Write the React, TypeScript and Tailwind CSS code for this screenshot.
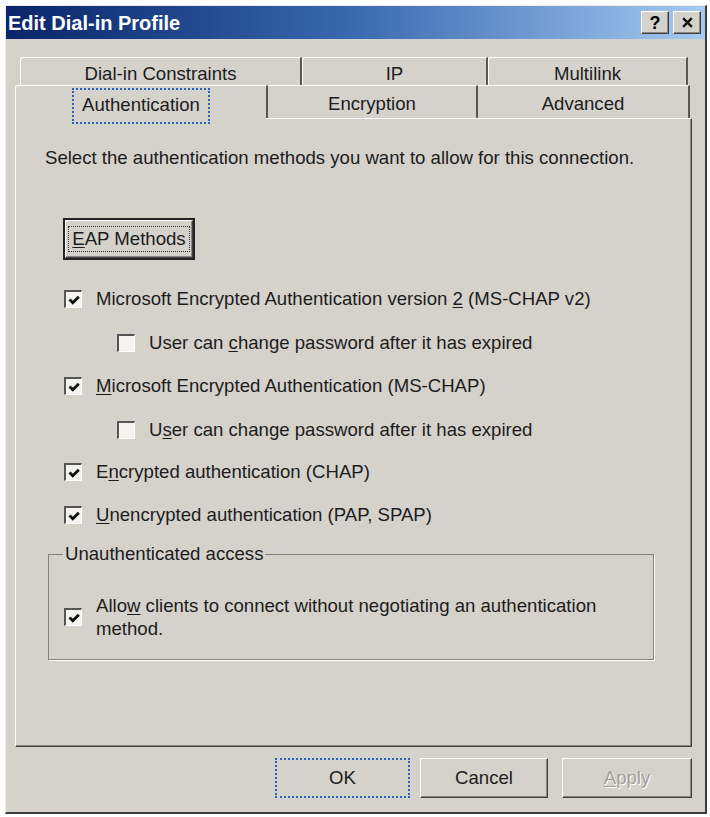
import React from "react";

const face = "bg-[#d5d2cc]";
const font = "font-['Liberation_Sans',Arial,sans-serif]";

const raised =
  "border-t border-l border-t-white border-l-white border-r border-b border-r-[#404040] border-b-[#404040] shadow-[inset_-1px_-1px_0_#8a8782]";

const CheckMark: React.FC = () => (
  <svg viewBox="0 0 14 14" className="w-[14px] h-[14px] shrink-0">
    <path d="M2.5 6.5 L5.8 9.8 L11.8 3.8" fill="none" stroke="#111" strokeWidth="2.8" />
  </svg>
);

const Checkbox: React.FC<{ checked?: boolean }> = ({ checked }) => (
  <span className="shrink-0 w-[18px] h-[18px] bg-[#f4f3f0] border-t-2 border-l-2 border-t-[#555] border-l-[#555] border-r border-b border-r-white border-b-white flex items-center justify-center">
    {checked && <CheckMark />}
  </span>
);

interface RowProps {
  checked?: boolean;
  indent?: boolean;
  className?: string;
  children: React.ReactNode;
}

const CheckRow: React.FC<RowProps> = ({ checked, indent, className, children }) => (
  <div
    className={
      "flex items-center h-[24px] gap-[14px] " +
      (indent ? "ml-[72px] " : "ml-[19px] ") +
      (className ?? "")
    }
  >
    <Checkbox checked={checked} />
    <span className="whitespace-nowrap">{children}</span>
  </div>
);

const backTabs = [
  { label: "Dial-in Constraints", w: "w-[282px]" },
  { label: "IP", w: "w-[186px]" },
  { label: "Multilink", w: "w-[200px]" },
];

const App: React.FC = () => {
  return (
    <div className={"w-[710px] h-[817px] bg-white pt-[5px] pl-[5px] text-[18.6px] text-[#1c1c1c] " + font}>
      <div
        className={
          "w-[702px] h-[809px] flex flex-col border-t border-l border-t-[#ecebe7] border-l-[#ecebe7] border-r-2 border-b-2 border-r-[#3c3c3c] border-b-[#3c3c3c] " +
          face
        }
      >
        {/* title bar */}
        <div className="h-[33px] flex items-center justify-between bg-gradient-to-r from-[#0a246a] via-[#3a6ab0] to-[#a6caf0] pl-[2px] pr-[4px]">
          <span className="text-white font-bold text-[20px] leading-none">Edit Dial-in Profile</span>
          <div className="flex gap-[4px]">
            <span
              className={"w-[28px] h-[23px] flex items-center justify-center text-[18px] font-bold leading-none text-black " + face + " " + raised}
            >
              ?
            </span>
            <span className={"w-[28px] h-[23px] flex items-center justify-center " + face + " " + raised}>
              <svg viewBox="0 0 12 12" className="w-[13px] h-[13px]">
                <path d="M2 2 L10 10 M10 2 L2 10" stroke="#111" strokeWidth="2.2" />
              </svg>
            </span>
          </div>
        </div>

        <div className="pl-[9px] pt-[18px]">
          {/* back row of tabs */}
          <div className="flex ml-[5px] h-[28px]">
            {backTabs.map((t) => (
              <div
                key={t.label}
                className={
                  "flex items-center justify-center pt-[4px] rounded-tl-[3px] border-t border-l border-t-white border-l-white border-r-2 border-r-[#5a5855] " +
                  t.w
                }
              >
                {t.label}
              </div>
            ))}
          </div>
          {/* front row of tabs */}
          <div className="flex h-[33px] relative z-10">
            <div className="relative w-[253px] flex items-center justify-center border-t border-l border-t-white border-l-white border-r-2 border-r-[#5a5855] rounded-tl-[3px]">
              <span className="mt-[8px] px-[8px] pt-[1px] pb-[4px] border-2 border-dotted border-[#2a5fc0]">
                Authentication
              </span>
              <span className={"absolute left-0 right-0 -bottom-[1px] h-[2px] " + face} />
            </div>
            <div className="w-[210px] flex items-center justify-center pt-[4px] border-t border-t-white border-r-2 border-r-[#5a5855]">
              Encryption
            </div>
            <div className="w-[212px] flex items-center justify-center pt-[4px] border-t border-t-white border-r-2 border-r-[#5a5855]">
              Advanced
            </div>
          </div>

          {/* tab panel */}
          <div className="w-[677px] h-[629px] pl-[29px] pt-[28px] border-t border-l border-t-white border-l-white border-r border-b border-r-[#404040] border-b-[#404040] shadow-[inset_-1px_-1px_0_#8a8782]">
            <p className="leading-[22px] whitespace-nowrap">
              Select the authentication methods you want to allow for this connection.
            </p>

            <button
              className={
                "mt-[49px] ml-[18px] w-[132px] h-[42px] border-2 border-[#222] flex items-center justify-center " + face
              }
            >
              <span className={"w-full h-full flex items-center justify-center " + raised}>
                <span className="px-[3px] border border-dotted border-[#333] leading-[24px]">
                  <span className="underline underline-offset-2">E</span>AP Methods
                </span>
              </span>
            </button>

            <CheckRow checked className="mt-[27px]">
              Microsoft Encrypted Authentication version <span className="underline underline-offset-2">2</span> (MS-CHAP v2)
            </CheckRow>
            <CheckRow indent className="mt-[20px]">
              User can <span className="underline underline-offset-2">c</span>hange password after it has expired
            </CheckRow>
            <CheckRow checked className="mt-[19px]">
              <span className="underline underline-offset-2">M</span>icrosoft Encrypted Authentication (MS-CHAP)
            </CheckRow>
            <CheckRow indent className="mt-[20px]">
              U<span className="underline underline-offset-2">s</span>er can change password after it has expired
            </CheckRow>
            <CheckRow checked className="mt-[18px]">
              E<span className="underline underline-offset-2">n</span>crypted authentication (CHAP)
            </CheckRow>
            <CheckRow checked className="mt-[19px]">
              <span className="underline underline-offset-2">U</span>nencrypted authentication (PAP, SPAP)
            </CheckRow>

            <fieldset className="mt-[16px] ml-[3px] w-[606px] border border-[#84817b] shadow-[1px_1px_0_#fff] pb-[19px]">
              <legend className="ml-[14px] px-[2px] leading-[22px]">Unauthenticated access</legend>
              <div className="flex items-center gap-[14px] ml-[15px] mt-[29px]">
                <Checkbox checked />
                <span className="w-[520px] leading-[23px]">
                  Allo<span className="underline underline-offset-2">w</span> clients to connect without negotiating an
                  authentication method.
                </span>
              </div>
            </fieldset>
          </div>

          {/* dialog buttons */}
          <div className="flex mt-[11px] ml-[260px]">
            <button
              className={"w-[135px] h-[40px] flex items-center justify-center border-2 border-dotted border-[#2a5fc0] " + face}
            >
              OK
            </button>
            <button
              className={"ml-[10px] w-[128px] h-[40px] flex items-center justify-center " + face + " " + raised}
            >
              Cancel
            </button>
            <button
              className={
                "ml-[14px] w-[130px] h-[40px] flex items-center justify-center text-[#a3a09a] [text-shadow:1px_1px_0_#fff] " +
                face +
                " " +
                raised
              }
            >
              <span className="underline underline-offset-2">A</span>pply
            </button>
          </div>
        </div>
      </div>
    </div>
  );
};

export default App;
